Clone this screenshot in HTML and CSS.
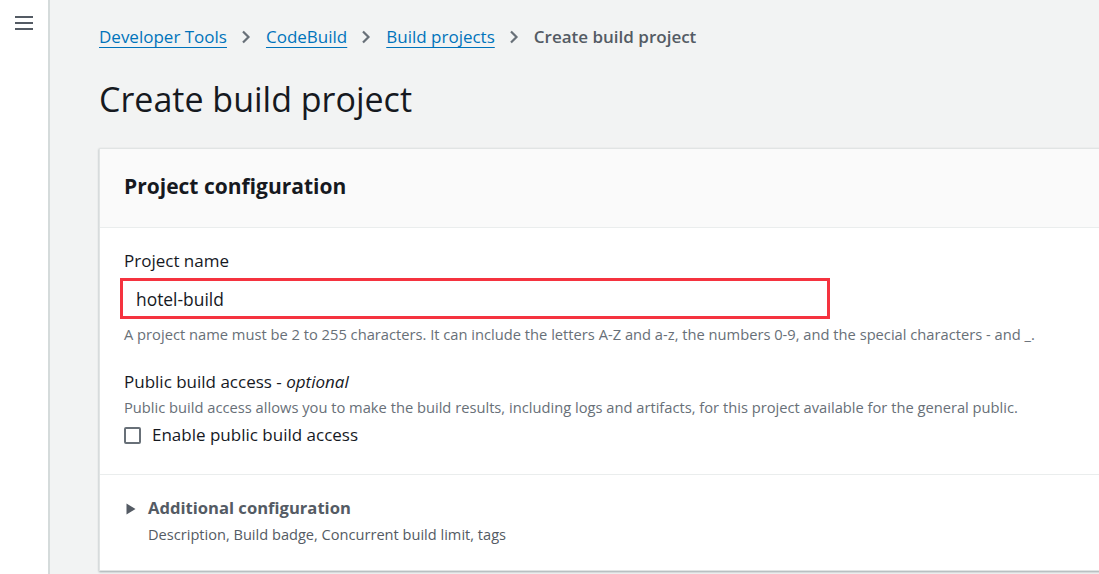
FILE: index.html
```html
<!DOCTYPE html>
<html lang="en">
<head>
<meta charset="utf-8">
<title>Create build project</title>
<link rel="stylesheet" href="styles.css">
</head>
<body>
<div class="layout">
  <aside class="sidebar">
    <button class="menu-btn" aria-label="Open navigation">
      <svg width="18" height="14" viewBox="0 0 18 14"><rect x="0" y="0" width="18" height="2" fill="#545b64"/><rect x="0" y="6" width="18" height="2" fill="#545b64"/><rect x="0" y="12" width="18" height="2" fill="#545b64"/></svg>
    </button>
  </aside>
  <main class="main">
    <nav class="breadcrumbs">
      <a href="#" class="crumb">Developer Tools</a>
      <svg class="chev" width="10" height="14" viewBox="0 0 10 14"><path d="M2 1.5 L7.5 7 L2 12.5" fill="none" stroke="#687078" stroke-width="2.2"/></svg>
      <a href="#" class="crumb">CodeBuild</a>
      <svg class="chev" width="10" height="14" viewBox="0 0 10 14"><path d="M2 1.5 L7.5 7 L2 12.5" fill="none" stroke="#687078" stroke-width="2.2"/></svg>
      <a href="#" class="crumb">Build projects</a>
      <svg class="chev" width="10" height="14" viewBox="0 0 10 14"><path d="M2 1.5 L7.5 7 L2 12.5" fill="none" stroke="#687078" stroke-width="2.2"/></svg>
      <span class="crumb-current">Create build project</span>
    </nav>
    <h1 class="page-title">Create build project</h1>
    <section class="panel">
      <header class="panel-header">
        <h2>Project configuration</h2>
      </header>
      <div class="panel-body">
        <div class="field">
          <label class="field-label" for="pname">Project name</label>
          <div class="input-box"><span class="input-text" id="pname">hotel-build</span></div>
          <div class="help">A project name must be 2 to 255 characters. It can include the letters A-Z and a-z, the numbers 0-9, and the special characters - and _.</div>
        </div>
        <div class="field second">
          <div class="field-label">Public build access - <em>optional</em></div>
          <div class="help desc">Public build access allows you to make the build results, including logs and artifacts, for this project available for the general public.</div>
          <div class="check-row">
            <span class="checkbox"></span>
            <span class="check-label">Enable public build access</span>
          </div>
        </div>
      </div>
      <div class="expander">
        <svg class="caret" width="10" height="12" viewBox="0 0 10 12"><path d="M0.5 0.5 L9.5 6 L0.5 11.5 Z" fill="#545b64"/></svg>
        <div>
          <div class="exp-title">Additional configuration</div>
          <div class="exp-desc">Description, Build badge, Concurrent build limit, tags</div>
        </div>
      </div>
    </section>
  </main>
</div>
</body>
</html>
```
FILE: styles.css
```css
* { box-sizing: border-box; }
html, body { margin: 0; padding: 0; }
body {
  font-family: "Open Sans", "Noto Sans", Arial, sans-serif;
  color: #16191f;
  background: #f2f3f3;
  overflow: hidden;
}
.layout {
  display: flex;
  height: 574px;
  overflow: hidden;
}
.sidebar {
  width: 50px;
  flex: 0 0 50px;
  background: #fff;
  border-right: 2px solid #d5dbdb;
}
.menu-btn {
  margin: 16px 0 0 15px;
  padding: 0;
  border: 0;
  background: none;
  display: block;
  line-height: 0;
}
.main {
  flex: 1;
  padding: 26px 0 0 49px;
  min-width: 0;
}
.breadcrumbs {
  display: flex;
  align-items: center;
  font-size: 17px;
  line-height: 22px;
  white-space: nowrap;
}
.crumb {
  color: #0073bb;
  text-decoration: underline;
  text-underline-offset: 4px;
  text-decoration-thickness: 1px;
}
.chev { margin: 0 15px 0 14px; }
.crumb-current {
  color: #545b64;
  font-weight: 600;
}
.page-title {
  margin: 30px 0 0 0;
  font-size: 34px;
  line-height: 42px;
  font-weight: 400;
  color: #16191f;
}
.panel {
  margin-top: 28px;
  width: 1100px;
  background: #fff;
  border: 1px solid #e1e4e4;
  box-shadow: 0 1px 2px rgba(0,28,36,0.35);
}
.panel-header {
  background: #fafafa;
  border-bottom: 1px solid #eaeded;
  height: 79px;
  display: flex;
  align-items: center;
  padding: 0 24px;
}
.panel-header h2 {
  margin: 0;
  font-size: 21px;
  font-weight: 700;
  line-height: 28px;
  padding-bottom: 4px;
}
.panel-body {
  padding: 22px 24px 28px 24px;
  border-bottom: 1px solid #eaeded;
}
.field-label {
  display: block;
  font-size: 17px;
  line-height: 22px;
  color: #16191f;
}
.input-box {
  margin: 6px 0 0 -4px;
  width: 710px;
  height: 41px;
  border: 3px solid #f5333f;
  display: flex;
  align-items: center;
  padding-left: 13px;
}
.input-text {
  font-size: 17.4px;
  color: #16191f;
}
.help {
  margin-top: 5px;
  font-size: 14.7px;
  line-height: 20px;
  color: #687078;
  white-space: nowrap;
}
.second { margin-top: 27px; }
.desc { margin-top: 4px; }
.check-row {
  display: flex;
  align-items: center;
  margin-top: 7px;
}
.checkbox {
  width: 17px;
  height: 17px;
  border: 2px solid #687078;
  border-radius: 2px;
  margin-right: 11px;
}
.check-label {
  font-size: 17px;
  line-height: 22px;
}
.expander {
  display: flex;
  align-items: flex-start;
  padding: 22px 24px 26px 26px;
}
.caret { margin-top: 6px; margin-right: 12px; }
.exp-title {
  font-size: 16.6px;
  font-weight: 700;
  line-height: 22px;
  color: #545b64;
}
.exp-desc {
  margin-top: 5px;
  font-size: 14.6px;
  line-height: 20px;
  color: #545b64;
}
```
